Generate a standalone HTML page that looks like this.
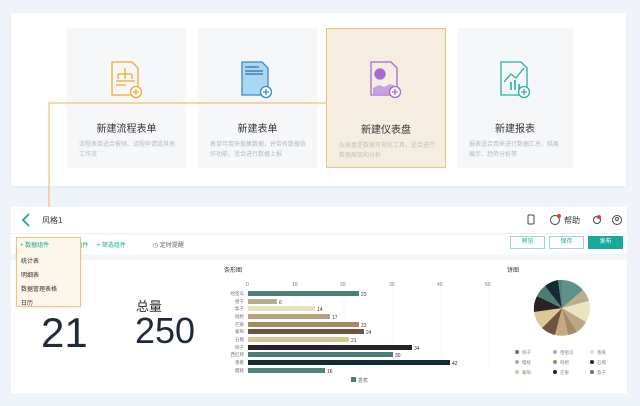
<!DOCTYPE html>
<html><head><meta charset="utf-8"><style>
*{margin:0;padding:0;box-sizing:border-box}
body{width:640px;height:406px;background:#eef4fa;font-family:"Liberation Sans","Noto Sans CJK SC",sans-serif;position:relative;overflow:hidden;color:#333}
.a{position:absolute}
.card{position:absolute;top:28px;width:119px;height:140px;background:#f6f7f9}
.card .t{position:absolute;top:92px;width:100%;text-align:center;font-size:10px;color:#333}
.card .d{position:absolute;top:112px;left:12px;right:10px;font-size:6px;line-height:10px;color:#b5b9bf}
.w{background:#fff}
.sm{font-size:6px}
</style></head><body>
<div class="a w" style="left:11px;top:13px;width:615px;height:173px;box-shadow:0 1px 3px rgba(0,0,0,.04)"></div>
<div class="card" style="left:67px"><div class="t">新建流程表单</div><div class="d">流程表单适合报销、流程申请或其他工作流</div></div>
<div class="card" style="left:198px"><div class="t">新建表单</div><div class="d">表单可用来搜集数据，并带有数据协作功能，适合进行数据上报</div></div>
<div class="card" style="left:326px;width:120px;background:#f5ede0;border:1px solid #f0c37a"><div class="t">新建仪表盘</div><div class="d" style="color:#c4bfb6">仪表盘是数据可视化工具，适合进行数据展现和分析</div></div>
<div class="card" style="left:457px;width:116px"><div class="t">新建报表</div><div class="d">报表适合用来进行数据汇总，结果展示，趋势分析等</div></div>
<svg class="a" style="left:0;top:0" width="640" height="240">
<g fill="none" stroke-width="1.3">
<g stroke="#f0a830"><path d="M112 62h20l6 6v27h-26z"/><path d="M125 68v6M118 74h14M118 74v5M125 74v5M132 74v5M116 81h19M116 85h10" /></g>
<circle cx="136" cy="92" r="5.5" fill="#fff" stroke="#f0a830"/><path d="M136 89v6M133 92h6" stroke="#f0a830"/>
<g stroke="#3d88c8"><path d="M242 62h20l6 6v27h-26z" fill="#a9d8f4"/><path d="M245 67h14M245 71h18M245 74h18" stroke="#2d6fa8"/></g>
<circle cx="266" cy="92" r="5.5" fill="#fff" stroke="#3d88c8"/><path d="M266 89v6M263 92h6" stroke="#3d88c8"/>
<g stroke="#a66ad0"><path d="M371 62h20l6 6v27h-26z"/><circle cx="380" cy="74" r="5" fill="#a66ad0"/><path d="M373 88l6-3 5 2 6-3 5 2v8h-22z" fill="#c9a0e6" stroke="none"/></g>
<circle cx="395" cy="92" r="5.5" fill="#fff" stroke="#a66ad0"/><path d="M395 89v6M392 92h6" stroke="#a66ad0"/>
<g stroke="#2ab0a0"><path d="M501 62h20l6 6v27h-26z"/><path d="M504 82l7-8 5 4 8-10"/><path d="M511 90v-8M515 90v-10M519 90v-6" stroke-width="1.6"/></g>
<circle cx="524" cy="92" r="5.5" fill="#fff" stroke="#2ab0a0"/><path d="M524 89v6M521 92h6" stroke="#2ab0a0"/>
<path d="M326 103H49V232" stroke="#f0b450" stroke-width="1"/>
</g>
<path d="M45 230h7l-3.5 5z" fill="#f0a830"/>
</svg>
<!-- bottom panel -->
<div class="a w" style="left:11px;top:207px;width:616px;height:186px"></div>
<div class="a" style="left:11px;top:233px;width:616px;height:1px;background:#eef0f3"></div>
<div class="a" style="left:11px;top:254px;width:616px;height:6px;background:#f3f6fa"></div>
<svg class="a" style="left:20px;top:213px" width="12" height="14"><path d="M9 1L3 7l6 6" fill="none" stroke="#1aa89a" stroke-width="1.8"/></svg>
<div class="a" style="left:42px;top:215px;font-size:8px;color:#333">风格1</div>
<svg class="a" style="left:526px;top:213px" width="100" height="14"><rect x="2" y="2" width="6" height="9" rx="1" fill="none" stroke="#444" stroke-width="1"/><circle cx="29" cy="7" r="4.5" fill="none" stroke="#444"/><circle cx="33" cy="3" r="2" fill="#e33"/><circle cx="71" cy="7" r="3.5" fill="none" stroke="#444"/><circle cx="73" cy="4" r="2" fill="#e33"/><circle cx="91" cy="7" r="4.5" fill="none" stroke="#444"/><circle cx="91" cy="6" r="1.5" fill="none" stroke="#444"/></svg>
<div class="a" style="left:564px;top:215px;font-size:8px">帮助</div>
<div class="a sm" style="left:20px;top:240px;color:#1aa89a">+ 数据组件 &nbsp; &nbsp; &nbsp;+ 文本组件 &nbsp; &nbsp; + 筛选组件</div>
<div class="a sm" style="left:153px;top:240px;color:#666">◷ 定时提醒</div>
<div class="a sm" style="left:510px;top:236px;width:35px;height:13px;border:1px solid #9fd6cf;color:#1aa89a;text-align:center;line-height:11px">预览</div>
<div class="a sm" style="left:549px;top:236px;width:35px;height:13px;border:1px solid #9fd6cf;color:#1aa89a;text-align:center;line-height:11px">保存</div>
<div class="a sm" style="left:588px;top:236px;width:35px;height:13px;background:#1aa89a;color:#fff;text-align:center;line-height:13px">发布</div>
<div class="a w" style="left:17px;top:260px;width:97px;height:131px"></div>
<div class="a w" style="left:119px;top:260px;width:96px;height:131px"></div>
<div class="a w" style="left:220px;top:260px;width:278px;height:131px"></div>
<div class="a w" style="left:503px;top:260px;width:118px;height:131px"></div>
<div class="a" style="left:41px;top:310px;font-size:42px;color:#1e2a3a;line-height:46px">21</div>
<div class="a" style="left:136px;top:296px;font-size:13px;color:#333">总量</div>
<div class="a" style="left:135px;top:311px;font-size:36px;color:#1e2a3a;line-height:40px">250</div>
<div class="a sm" style="left:224px;top:265px">条形图</div>
<div class="a sm" style="left:507px;top:265px">饼图</div>
<svg class="a" style="left:220px;top:278px" width="278" height="110" font-family="Liberation Sans,Noto Sans CJK SC,sans-serif" font-size="5" fill="#777">
<g stroke="#eee" stroke-width="0.5"><path d="M28 9v84M76 9v84M124 9v84M173 9v84M221 9v84M269 9v84"/></g>
<text x="26" y="8">0</text><text x="72" y="8">10</text><text x="120" y="8">20</text><text x="169" y="8">30</text><text x="217" y="8">40</text><text x="265" y="8">50</text>
<g font-size="4.5" text-anchor="end">
<text x="24" y="17">哈密瓜</text><text x="24" y="25">橙子</text><text x="24" y="32">梨子</text><text x="24" y="40">枇杷</text><text x="24" y="48">芒果</text><text x="24" y="55">葡萄</text><text x="24" y="63">石榴</text><text x="24" y="71">柿子</text><text x="24" y="78">西红柿</text><text x="24" y="86">香蕉</text><text x="24" y="94">樱桃</text></g>
<g>
<rect x="28" y="13" width="111" height="5" fill="#4d7f78"/><rect x="28" y="21" width="29" height="5" fill="#b5ad8f"/><rect x="28" y="28" width="67" height="5" fill="#e8dfbb"/><rect x="28" y="36" width="82" height="5" fill="#b8a07c"/><rect x="28" y="44" width="111" height="5" fill="#a48a60"/><rect x="28" y="51" width="116" height="5" fill="#6b5540"/><rect x="28" y="59" width="101" height="5" fill="#d9c594"/><rect x="28" y="67" width="164" height="5" fill="#2b2226"/><rect x="28" y="74" width="145" height="5" fill="#4b7d75"/><rect x="28" y="82" width="202" height="5" fill="#132b35"/><rect x="28" y="90" width="77" height="5" fill="#4d857e"/></g>
<g fill="#333"><text x="141" y="18">23</text><text x="59" y="26">6</text><text x="97" y="33">14</text><text x="112" y="41">17</text><text x="141" y="49">23</text><text x="146" y="56">24</text><text x="131" y="64">21</text><text x="194" y="72">34</text><text x="175" y="79">30</text><text x="232" y="87">42</text><text x="107" y="95">16</text></g>
<rect x="131" y="99" width="5" height="5" fill="#4d7f78"/><text x="138" y="104">香蕉</text>
</svg>
<svg class="a" style="left:503px;top:270px" width="118" height="120" font-family="Liberation Sans,Noto Sans CJK SC,sans-serif" font-size="4.5" fill="#888">
<g transform="translate(59,38)">
<path d="M0 0L0-28A28 28 0 0 1 21-18z" fill="#5f918a"/>
<path d="M0 0L21-18A28 28 0 0 1 27-7z" fill="#b7ae90"/>
<path d="M0 0L27-7A28 28 0 0 1 24 14z" fill="#ebe2c0"/>
<path d="M0 0L24 14A28 28 0 0 1 15 24z" fill="#bda586"/>
<path d="M0 0L15 24A28 28 0 0 1 6 27z" fill="#a58b63"/>
<path d="M0 0L6 27A28 28 0 0 1-7 27z" fill="#c3ab7f"/>
<path d="M0 0L-7 27A28 28 0 0 1-20 20z" fill="#6b5540"/>
<path d="M0 0L-20 20A28 28 0 0 1-28 4z" fill="#dcc896"/>
<path d="M0 0L-28 4A28 28 0 0 1-25-12z" fill="#2b2226"/>
<path d="M0 0L-25-12A28 28 0 0 1-17-22z" fill="#4b7d75"/>
<path d="M0 0L-17-22A28 28 0 0 1-4-28z" fill="#132b35"/>
<path d="M0 0L-4-28A28 28 0 0 1 0-28z" fill="#4d857e"/>
</g>
<g><circle cx="14" cy="82" r="2" fill="#4d7f78"/><text x="19" y="84">柿子</text><circle cx="52" cy="82" r="2" fill="#9bb"/><text x="57" y="84">哈密瓜</text><circle cx="89" cy="82" r="2" fill="#e8dfbb"/><text x="94" y="84">香蕉</text>
<circle cx="14" cy="92" r="2" fill="#b5ad8f"/><text x="19" y="94">樱桃</text><circle cx="52" cy="92" r="2" fill="#a48a60"/><text x="57" y="94">枇杷</text><circle cx="89" cy="92" r="2" fill="#2b2226"/><text x="94" y="94">石榴</text>
<circle cx="14" cy="102" r="2" fill="#d9c594"/><text x="19" y="104">葡萄</text><circle cx="52" cy="102" r="2" fill="#132b35"/><text x="57" y="104">芒果</text><circle cx="89" cy="102" r="2" fill="#4b7d75"/><text x="94" y="104">梨子</text></g>
</svg>
<div class="a" style="left:16px;top:237px;width:65px;height:70px;background:#fdf6ea;border:1px solid #f0c37a;box-shadow:0 1px 3px rgba(0,0,0,.08)"></div>
<div class="a sm" style="left:20px;top:240px;color:#1aa89a">+ 数据组件</div>
<div class="a sm" style="left:21px;top:255px;line-height:14px;color:#333">统计表<br>明细表<br>数据管理表格<br>日历</div>
</body></html>
